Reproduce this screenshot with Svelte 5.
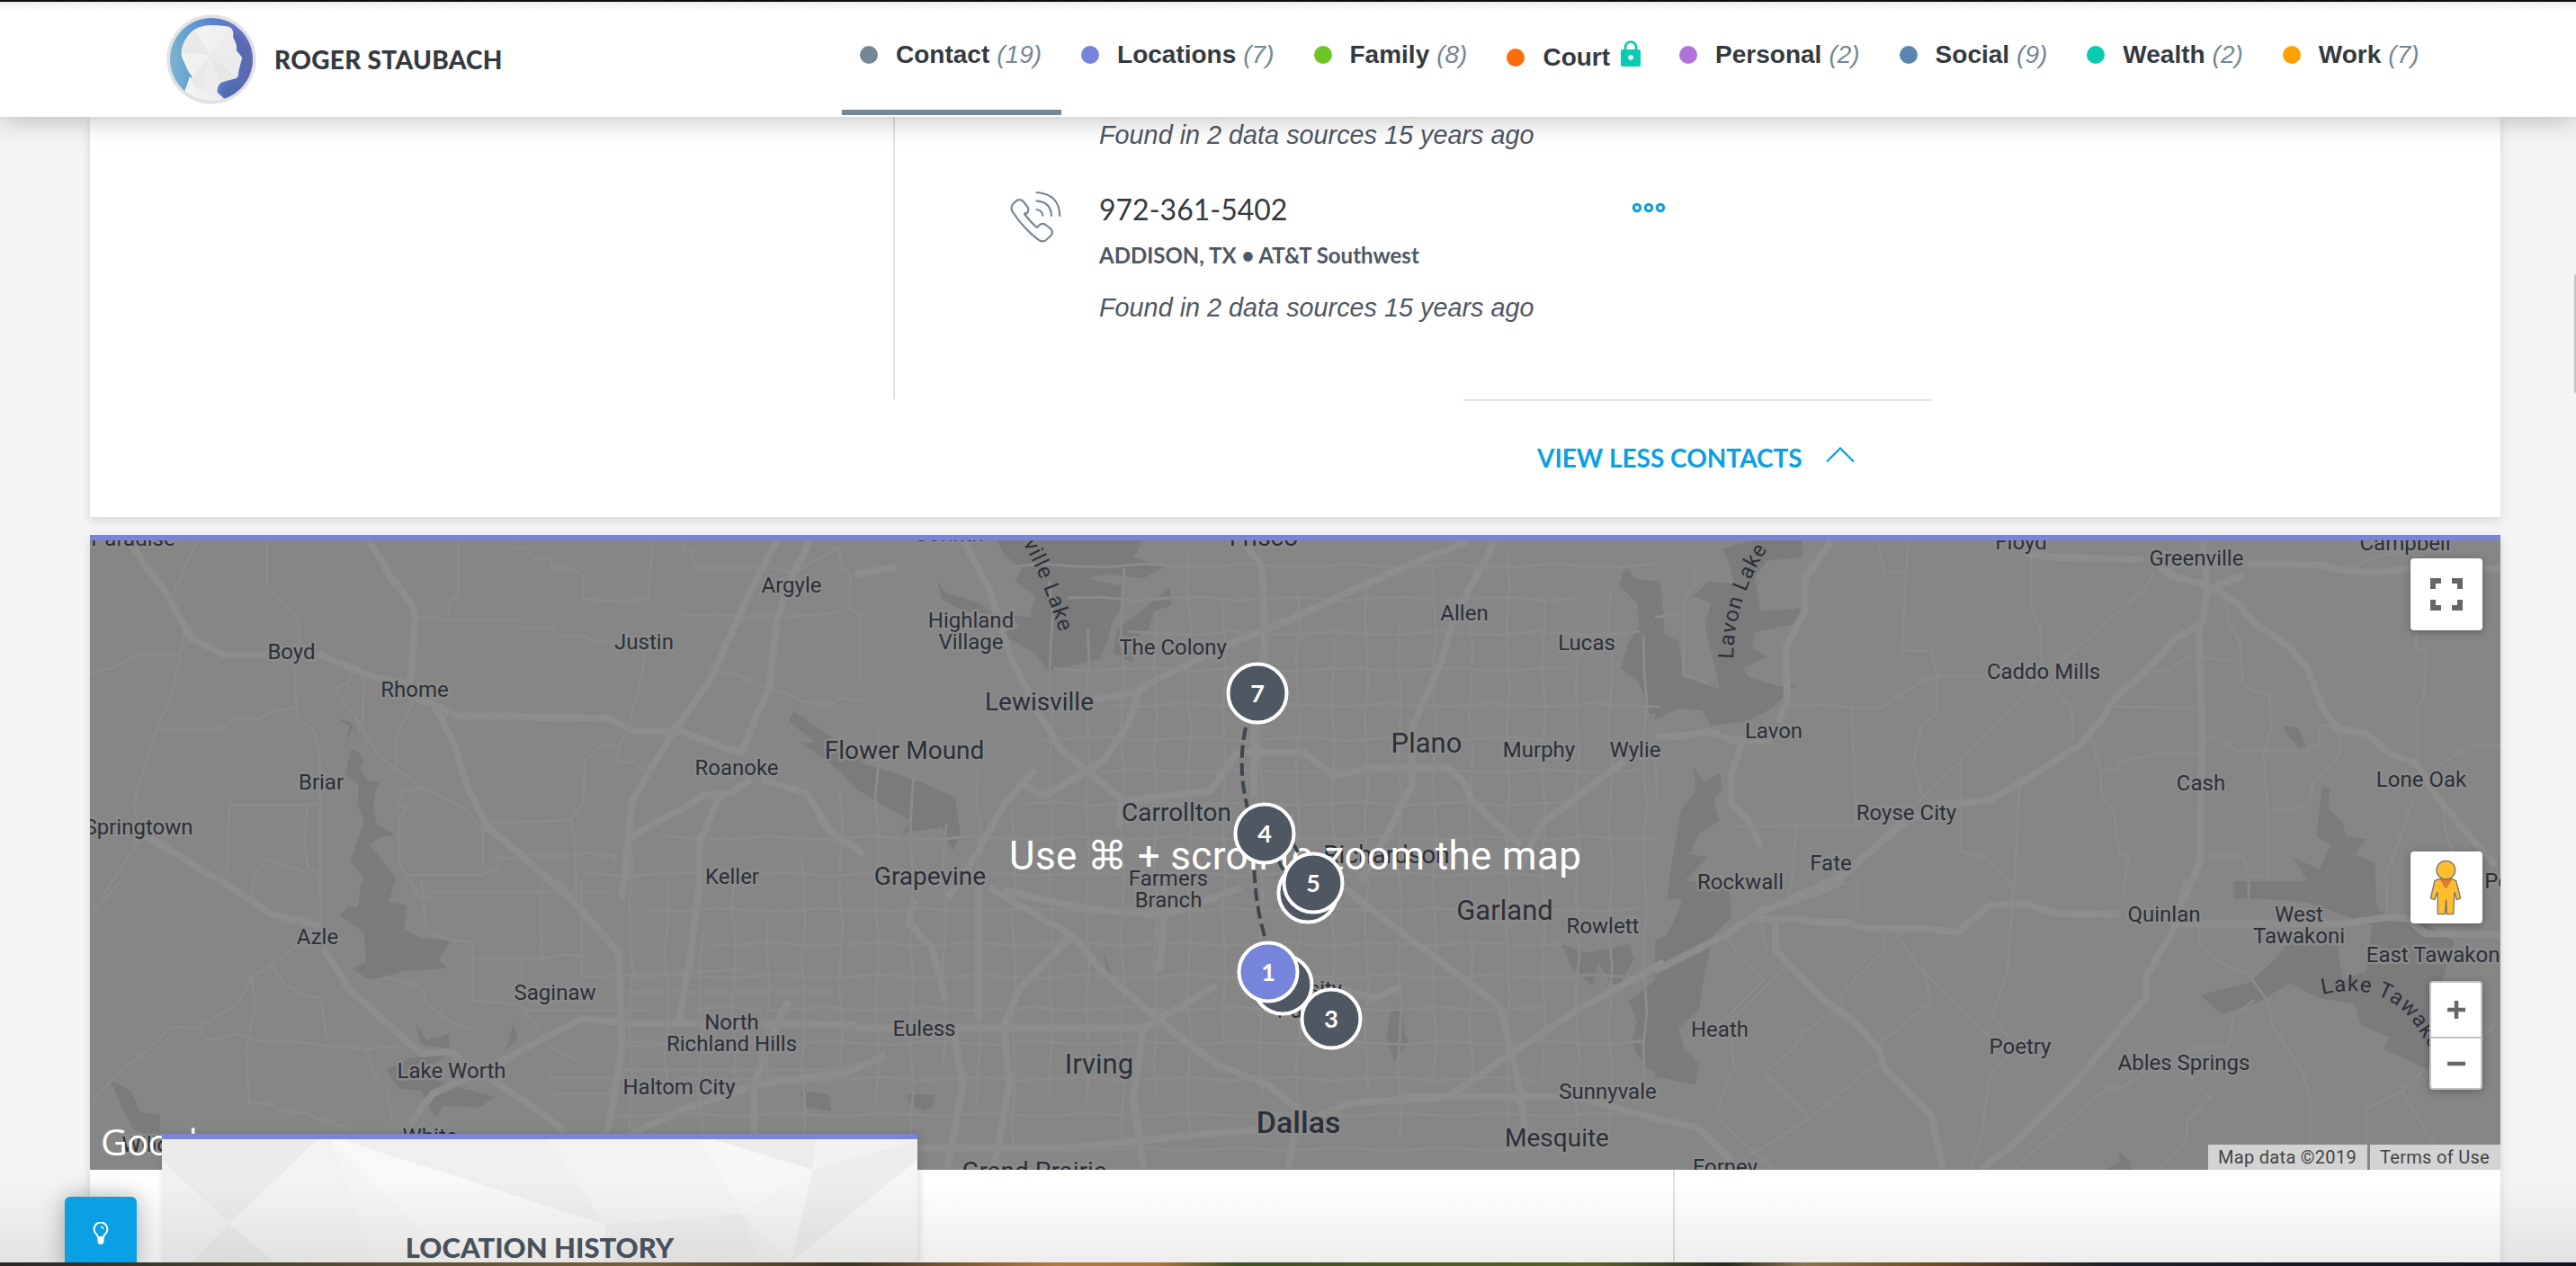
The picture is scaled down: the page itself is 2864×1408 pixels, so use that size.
<script>
  const tabs = [
    { name: 'Contact', count: '(19)', color: '#758793', active: true },
    { name: 'Locations', count: '(7)', color: '#7784db' },
    { name: 'Family', count: '(8)', color: '#6dc425' },
    { name: 'Court', locked: true, color: '#ff6d0a' },
    { name: 'Personal', count: '(2)', color: '#b072dd' },
    { name: 'Social', count: '(9)', color: '#5b87ae' },
    { name: 'Wealth', count: '(2)', color: '#07cbb3' },
    { name: 'Work', count: '(7)', color: '#ffa200' },
  ];

  // Town labels: text, centre x, baseline y, font size
  const towns = [
    ['Paradise', 148, 607, 24], ['Boyd', 324, 733, 24], ['Rhome', 461, 775, 24],
    ['Argyle', 880, 659, 24], ['Justin', 716, 722, 24], ['Roanoke', 819, 862, 24],
    ['Flower Mound', 1005.5, 844, 28], ['Briar', 357, 878, 24], ['Springtown', 154, 928, 24],
    ['Keller', 814, 983, 24], ['Azle', 353, 1050, 24], ['Saginaw', 617, 1112, 24],
    ['North', 813.5, 1145, 24], ['Richland Hills', 813.5, 1169, 24], ['Euless', 1027.5, 1152, 24],
    ['Lake Worth', 502, 1199, 24], ['Haltom City', 755, 1217, 24], ['White', 478, 1272, 24],
    ['Willow Park', 198, 1281, 24], ['Corinth', 1055, 602, 24], ['Frisco', 1405, 607, 28],
    ['Highland', 1079.5, 697.5, 24], ['Village', 1079.5, 721.5, 24], ['The Colony', 1304, 728, 24],
    ['Allen', 1628, 690, 24], ['Lucas', 1764, 723, 24], ['Lewisville', 1155.5, 790, 28],
    ['Plano', 1586, 837, 31], ['Murphy', 1711, 842, 24], ['Wylie', 1818, 842, 24],
    ['Carrollton', 1308, 913, 28], ['Richardson', 1541.5, 960, 28], ['Grapevine', 1034, 984, 28],
    ['Farmers', 1299, 985, 24], ['Branch', 1299, 1009, 24], ['Garland', 1673, 1023, 31],
    ['Rowlett', 1782, 1038, 24], ['University', 1440, 1108, 24], ['Park', 1444, 1132, 24],
    ['Irving', 1222, 1194, 31], ['Mesquite', 1731, 1275, 28], ['Sunnyvale', 1787.5, 1222, 24],
    ['Grand Prairie', 1150, 1312, 28], ['Floyd', 2247, 611, 24], ['Greenville', 2442, 629, 24],
    ['Campbell', 2674, 612, 24], ['Caddo Mills', 2272, 755, 24], ['Lavon', 1972, 821, 24],
    ['Cash', 2447, 879, 24], ['Lone Oak', 2692, 875, 24], ['Royse City', 2119.5, 912, 24],
    ['Fate', 2035.5, 968, 24], ['Rockwall', 1935, 989, 24], ['Point', 2790, 988, 24],
    ['Quinlan', 2406, 1025, 24], ['West', 2556, 1025, 24], ['Tawakoni', 2556, 1049, 24],
    ['East Tawakoni', 2708, 1070, 24], ['Heath', 1912, 1153, 24], ['Poetry', 2246, 1172, 24],
    ['Ables Springs', 2428, 1190, 24], ['Forney', 1918, 1306, 24],
  ];

  const pins = [
    { n: '7', x: 1398, y: 771 },
    { n: '4', x: 1406, y: 927 },
    { n: '6', x: 1454, y: 993 },
    { n: '5', x: 1460, y: 982 },
    { n: '2', x: 1426, y: 1095 },
    { n: '3', x: 1480, y: 1133 },
    { n: '1', x: 1410, y: 1081, current: true },
  ];

  // Local street grid of the metro area, wobbling slightly from block to block
  function street(fixed, from, to, vertical, seed) {
    let d = '';
    let off = 0;
    for (let t = from, i = 0; t <= to; t += 38, i++) {
      off += Math.sin(seed * 7.3 + i * 2.1) * 4;
      const a = (fixed + off).toFixed(1);
      d += (i ? 'L' : 'M') + (vertical ? `${a} ${t}` : `${t} ${a}`);
    }
    return d;
  }
  const streets = [];
  for (let i = 0; i < 30; i++) {
    const x = 700 + i * 39;
    const top = i < 6 ? 930 : i < 12 ? 800 : 610;
    streets.push(street(x, top + (i * 53) % 120, 1300 - ((i * 71) % 110), true, i));
  }
  for (let i = 0; i < 18; i++) {
    const y = 630 + i * 38;
    const left = i < 8 ? 1120 : 650;
    streets.push(street(y, left + (i * 67) % 150, 1860 - ((i * 97) % 190), false, i + 40));
  }
</script>

<div class="page">
  <div class="topline"></div>
  <header>
    <div class="person">
      <svg class="avatar" viewBox="0 0 300 300">
        <defs>
          <linearGradient id="av" x1="0" y1=".6" x2="1" y2=".5">
            <stop offset="0" stop-color="#84b6d0" /><stop offset=".3" stop-color="#5f9fd2" />
            <stop offset=".65" stop-color="#5a7bc8" /><stop offset="1" stop-color="#7d79cd" />
          </linearGradient>
          <clipPath id="avc"><circle cx="150" cy="150" r="138" /></clipPath>
          <filter id="avs"><feGaussianBlur stdDeviation="9" /></filter>
        </defs>
        <circle cx="150" cy="150" r="149" fill="#e2e2e3" />
        <g clip-path="url(#avc)">
          <rect width="300" height="300" fill="url(#av)" />
          <path d="M215 45L290 100L300 260L200 300L172 250L245 210Z" fill="#3f5690" opacity=".45" filter="url(#avs)" />
          <path d="M62 300V252L74 222L77 209L88 212Q72 178 60 160Q46 140 51 116Q56 88 79 62Q104 37 145 36Q205 35 218 48Q226 60 222 76Q232 94 235 108Q232 117 236 124Q250 138 252 146Q250 153 243 155Q245 162 242 165L243 172Q238 178 240 186Q243 206 232 213Q205 214 184 226Q168 240 170 260L198 286L190 310Z" fill="#ececec" />
          <g>
            <path d="M145 135L98 56L145 36Z" fill="#f3f3f3" />
            <path d="M145 135L51 128Q52 90 98 56Z" fill="#e9e9e8" />
            <path d="M145 135L145 36L212 42Z" fill="#f0f0f0" />
            <path d="M145 135L51 128Q60 175 88 212Z" fill="#f1f1f0" />
            <path d="M145 135L88 212L110 270Z" fill="#e9e9e8" />
            <path d="M145 135L180 228L235 212Z" fill="#e7e5e6" />
            <path d="M145 135L252 146L235 212Z" fill="#ebebea" />
            <path d="M77 209L62 260L100 285L90 240Z" fill="#f4f4f4" />
            <path d="M90 240L165 275L195 290L100 285Z" fill="#f1f1f0" />
          </g>
        </g>
      </svg>
      <span class="name">ROGER STAUBACH</span>
    </div>
    <nav>
      {#each tabs as tab}
        <div class="tab" class:active={tab.active} class:locked={tab.locked}>
          <svg class="dot" viewBox="0 0 20 20"><circle cx="10" cy="10" r="10" fill={tab.color} /></svg>
          <b>{tab.name}</b>
          {#if tab.locked}
            <svg class="lock" viewBox="0 0 22 30">
              <path d="M5 11V7.500a6 6 0 0 1 12 0V11" fill="none" stroke="#07cbb3" stroke-width="2.600" />
              <rect y="10" width="22" height="19" rx="2" fill="#07cbb3" />
              <circle cx="11" cy="19" r="2.800" fill="#fff" />
            </svg>
          {:else}
            <i>{tab.count}</i>
          {/if}
        </div>
      {/each}
    </nav>
  </header>

  <main>
    <section class="card contacts">
      <div class="body">
        <div class="side"></div>
        <div class="list">
          <p class="found">Found in 2 data sources 15 years ago</p>
          <div class="entry">
            <svg class="phone" viewBox="0 0 180 180" fill="none" stroke="#758793" stroke-width="6.500">
              <path d="M50 82Q62 74 58 60L42 39Q32 29 20 36L8 47Q-1 57 5 72Q38 124 92 167Q105 176 117 169L134 153Q144 142 134 131L117 117Q103 108 92 122L87 126Q66 108 46 81L50 75" transform="translate(2 3)" stroke-linejoin="round" />
              <path d="M86 69Q108 70 109 92M86 40Q137 42 138 92M86 12Q165 16 166 92" />
            </svg>
            <div class="details">
              <span class="number">972-361-5402</span>
              <span class="carrier">ADDISON, TX • AT&amp;T Southwest</span>
              <p class="found">Found in 2 data sources 15 years ago</p>
            </div>
            <svg class="more" viewBox="0 0 38 12" fill="none" stroke="#0aa0e2" stroke-width="3">
              <circle cx="6" cy="6" r="3.700" /><circle cx="19" cy="6" r="3.700" /><circle cx="32" cy="6" r="3.700" />
            </svg>
          </div>
        </div>
      </div>
      <div class="toggle">
        <span>VIEW LESS CONTACTS</span>
        <svg viewBox="0 0 32 18"><path d="M1 16.500L16 1.500L31 16.500" fill="none" stroke="#0aa0e2" stroke-width="2.200" /></svg>
      </div>
    </section>

    <section class="card locations">
      <div class="map">
        <svg class="canvas" viewBox="100 601 2680 700">
          <rect x="100" y="601" width="2680" height="700" fill="#868686" />
          <g class="water">
            <g transform="translate(60 580) scale(.5741 .3333)">
              <path d="M1432 632L1448 650L1470 680L1500 712L1530 760L1568 790V900L1545 880L1520 830L1490 790L1450 740L1475 735L1440 690L1424 665Z" />
              <path d="M575 760L590 770L600 800L592 830L610 865L630 870L622 910L618 960L625 1010L660 1045L628 1055L612 1080L635 1130L662 1190L650 1260H608L600 1190L574 1135L590 1050L600 1000L588 940L590 880L565 840Z" />
              <path d="M552 662Q578 660 584 700L590 730L578 690L568 730L572 680Z" />
            </g>
            <g transform="translate(60 980) scale(.6378 .3333)">
              <path d="M535 0H588L582 70L615 80L610 160L640 190L690 200L670 260L685 290L610 300L572 320L550 330L520 290L545 270L540 170L498 115L515 80L530 90Z" />
              <path d="M580 630L620 590L690 575L640 640L690 680L770 720L740 755L680 750L665 790L640 700L600 690Z" />
              <path d="M630 470L650 530L688 510L690 560L640 545ZM800 470L808 530L788 560L795 520Z" />
              <path d="M98 665L135 700L150 770L185 780V860L140 830L120 760Z" />
              <path d="M1300 700L1350 710L1355 770L1310 750ZM1488 710L1535 715L1520 770L1490 740Z" />
            </g>
            <g transform="translate(950 580) scale(.5741 .3333)">
              <path d="M275 64H560L540 120L600 150L560 190L490 175L450 190L520 215L518 290L500 330L490 400L475 460L375 500L350 440L282 375L320 350L300 310L340 320L350 250L310 200L325 160L290 110Z" />
              <path d="M610 220L615 280L580 300L570 360L530 400L540 470L500 440L510 360L560 290ZM160 200L180 240L240 270L270 310L210 300L170 260Z" />
              <path d="M0 800L60 830L130 870L195 920L205 1040L190 1100L170 1020L90 1040L110 1000L0 890Z" />
              <path d="M1495 150L1510 190L1560 200L1568 320V650L1540 640L1520 540L1485 490L1500 400L1520 350L1515 270L1480 210Z" />
            </g>
            <g transform="translate(950 980) scale(.5741 .3333)">
              <path d="M1500 210L1510 260L1480 350L1465 340L1440 270L1430 350L1390 290L1370 210L1420 240ZM1568 310V650L1530 620L1505 540L1515 470L1500 400Z" />
              <path d="M1040 420L1060 425L1065 500L1075 540L1045 600L1030 520ZM480 230L500 320L530 370L490 310ZM100 720L155 710L150 760L115 750Z" />
            </g>
            <g transform="translate(1840 580) scale(.6536 .3333)">
              <path d="M0 360L40 400L50 520L110 560L100 470L85 350L95 270L65 250L90 200L135 210L125 130L115 90L165 64H250V120L190 130L170 190L180 300L250 290L240 340L170 370L165 420L190 450L150 490L160 520L210 550L240 545L200 620L160 665L95 680L80 630L40 625L0 660Z" />
              <path d="M65 820L85 870L110 840L115 890L100 930L110 1000L75 1040L60 1110L90 1120L50 1200L60 1260H20L30 1120L45 960L70 900Z" />
              <path d="M1135 885L1148 890L1145 960L1170 1000L1175 1050L1210 1060L1190 1110L1225 1140L1226 1260H985V1225L1060 1215L1110 1200L1085 1120L1130 1160L1150 1080L1125 1050Z" />
              <path d="M1068 680L1095 690L1108 750L1095 755L1075 710Z" />
            </g>
            <g transform="translate(1840 980) scale(.6536 .3333)">
              <path d="M20 0L50 40L40 100L20 180L0 200V650L68 680L75 610L50 560L40 490L75 430L85 300L100 180L130 120L125 0Z" />
              <path d="M985 0H1226V60L1230 100L1300 130L1360 200L1340 330L1320 400L1318 630L1240 560L1250 520L1200 480L1190 410L1130 390L1080 340L1030 400L965 445L928 380L1010 340L1050 270L1080 200L1160 210L1170 330L1210 300L1220 150L1110 70L1040 60L985 60Z" />
              <path d="M790 900L810 940V963H765L790 940Z" />
            </g>
          </g>
          <g class="road minor">
            {#each streets as d}<path {d} />{/each}
            <g transform="translate(60 580) scale(.5741 .3333)">
              <path d="M278 64L225 260M412 64V210L475 330V430M465 470L470 650L505 700L515 800V1260M783 64V240L765 270V325M700 320H740L755 328H900L905 358H968L975 382H1030L1050 400L1100 398M890 64V90H918L922 122H962L965 155H1005L1025 185V258L1080 265L1150 260L1160 64M1218 64V100H1236L1240 155H1400L1430 175L1520 85L1525 150L1542 170V295L1560 310V520M1210 310L1420 318L1490 310L1530 296M70 508L120 485L155 447H245M252 370L245 450L225 590L200 680L155 940L165 1060L90 1260M200 690H325L345 660H395L420 635L465 620M575 505L570 540L542 555L580 640L605 720L635 790L715 890L790 950L840 1040M600 520L597 690M695 600L663 720V810M715 890L675 900L665 940L682 960L668 990V1140L685 1190L710 1260M340 945H515M340 945L335 1160L325 1190M490 950L485 1070L492 1160L515 1175M410 1125L470 1160L490 1170M410 1125L400 1160L385 1190V1260M840 1005L960 1000L1000 995L1025 940L1028 800L1060 745L1095 742L1090 800L1125 805L1145 835M1145 420L1140 500L1125 600L1110 700L1095 745M1000 995L1008 1060L1012 1260M830 1005V1150M685 1180H830L860 1155V1120L890 1125L910 1115H1010L1035 1105L1060 1115H1085V1140M720 1260L740 1235H1080M1285 500L1320 510L1380 555L1420 575L1450 600L1500 612L1525 590L1568 597" />
            </g>
            <g transform="translate(60 980) scale(.6378 .3333)">
              <path d="M118 0L63 110M465 0V150M450 180L370 290L345 320L320 410L250 490L205 485L160 570L105 650L63 750M250 490L270 530L320 510L360 535L400 530L460 545L545 560L605 550M380 280L400 340L435 380L465 390L475 520M345 320L350 420L335 560L340 740L380 745L400 770H430L520 830M545 560L560 650L580 690L590 810M575 320L640 350L650 410L700 480L730 490M640 0L650 170L690 195L730 205V400L810 410L870 560L910 600M730 260H850L880 245L920 248M815 260V400M820 432H1040M850 0V260M920 0V320L1160 300L1210 290M980 370H1380M990 550H1150M990 630H1360L1400 610M860 655H1010M870 708H1000" />
            </g>
            <g transform="translate(1840 580) scale(.6536 .3333)">
              <path d="M0 320L50 305V260L68 210V150M50 305L48 510L90 540M380 64L390 170H425M430 64L420 430L470 432L480 520V640L453 680L440 800L455 920M850 165L835 220L720 420L660 510L520 800L450 930L390 1040M640 110V290L655 350L658 470M670 540L710 625V730M225 615L290 612L335 620L385 622L460 525L500 515H560M335 620L342 1010M135 1018L350 1012M240 1015L235 1170L225 1260M520 800V1100L560 1120L610 1220M620 880L610 1260M740 715L758 830L760 910L780 960L790 1110L805 1120L795 1260M758 828H780L795 800L860 772H925M775 617L920 622M840 500H870L910 448L990 468M970 240L975 330L995 400L1000 540L1020 568L1045 575L1048 690L1035 770L1042 960V1185H1010L1000 1115H930M935 720L960 722L990 765H1060L1110 765L1130 740V682H1160M1165 700V780L1120 870L1110 940L1090 962H1042M1295 370V425L1313 430L1308 590L1297 620V800M1440 748L1385 750L1330 820M1290 920L1270 1040L1240 1200M1340 940L1345 1030L1360 1120M1190 155Q1230 90 1310 115M0 800L5 940" />
            </g>
            <g transform="translate(1840 980) scale(.6536 .3333)">
              <path d="M120 190L185 330L100 500M220 290L130 460V560L135 620L105 760M180 130L190 240M390 170V230L315 380L320 410L250 510L235 560L185 640L265 790L150 930M105 790L200 960M345 0V100M410 170L450 290L570 520M455 280L470 400L410 500L380 540M610 0L600 300L575 450L615 560L570 640L555 860L535 960M385 600L350 650L265 790M925 150V210L960 270L1010 310L1045 410L1050 480L1100 630L1115 720V960M1020 395L985 450L975 555H920L830 640L795 690H770L610 960M905 640L945 720L905 800V860L860 960M1305 635L1270 700L1210 760V960M1270 700L1310 830L1350 950M1010 0V60M1245 0V100M1350 150V170M1430 480L1380 560" />
            </g>
          </g>
          <g class="road major">
            <g transform="translate(60 580) scale(.5741 .3333)">
              <path d="M150 80L225 260L265 390L330 445H430M510 440L620 520L680 540M700 590L735 610L780 648L900 650L940 655L1070 656L1125 700L1215 700L1330 775M610 64L650 180L690 270L700 310L692 500L685 580M735 610L770 720L800 880L840 1020L910 1120L1000 1260M1400 64L1350 230L1270 530L1200 700L1120 930L1100 1260M1465 64L1430 180L1400 330L1385 560L1365 630L1330 780M1350 860L1310 905L1260 915L1110 1060M1370 860L1460 910L1500 1030L1568 1110M1290 915L1250 1070V1260M180 1050L380 1260" />
            </g>
            <g transform="translate(60 980) scale(.6378 .3333)">
              <path d="M290 0L380 110L465 150M470 220L510 350L560 440L640 575L690 570L720 610M875 0L985 240L990 560L970 790L960 870M1125 0L1110 250L1095 400L1090 480M760 620L920 460L1000 475H1150L1400 480M760 620L660 710L620 810M760 660L850 770L890 840M1280 400L1250 520L1220 680V850M1500 60L1490 140L1530 220L1555 400M1220 680L1100 760L1000 850M1450 580L1380 640L1220 680" />
            </g>
            <g transform="translate(950 580) scale(.5741 .3333)">
              <path d="M1190 64L1080 140L950 240L840 330L740 400L640 480L540 570L450 600M750 64L790 150L795 400L790 560L775 680V920M210 64L260 220L300 440L350 620L400 760L520 930L510 1020M550 570L530 680L480 800L370 915L330 880M520 930L690 900L740 770H870L930 850L1000 820H1150L1180 870L1200 940L1290 1080M1240 64L1160 330L1140 450L1080 690V880L1030 1050L980 1200M1490 800L1330 1010L1290 1150M350 830L290 940L240 1100L180 1260M0 180L80 150" />
            </g>
            <g transform="translate(950 980) scale(.5741 .3333)">
              <path d="M260 20L420 180L480 300L600 480L700 610L800 680L860 760M240 0V460M600 0V110L590 300M420 180L320 360L290 480L300 680L270 960M0 490H560L700 350M290 30L440 90L600 115L750 20M940 10L1080 200L1200 350L1250 420L1290 700L1300 860M1568 270L1400 430L1250 600L1150 720L960 740L850 820L640 850L420 890H120M1050 720L1300 720L1400 720L1568 800M860 760L840 960M560 480L540 720L560 960M190 480L210 680L180 960M870 340L960 370L1010 390L1060 350" />
            </g>
            <g transform="translate(1840 580) scale(.6536 .3333)">
              <path d="M300 64L255 190V300L222 420L225 600L210 670M0 720L50 715L90 700L130 728H200M150 730L130 840V940L160 1000L180 1090M630 105L680 120L830 127M860 150L880 180L940 215L990 270L1020 340L1080 420L1110 490L1135 620L1160 690L1210 710L1255 780L1295 805L1330 920L1430 1150M1010 140L1130 145L1180 165L1230 170L1300 150L1440 158M932 64L940 230L930 340L885 390L830 510L785 580L760 660L720 750L640 850L570 930L480 945L420 1010L320 1180L230 1260M925 350L930 640L928 1130L900 1260M1000 180L950 220" />
            </g>
            <g transform="translate(1840 980) scale(.6536 .3333)">
              <path d="M320 0L260 50L180 100L110 190L0 300M175 125H240L270 135L330 138L360 160H470L515 170L570 80L630 75L680 108L790 110M905 0L885 150L835 320V390L800 470L720 660L620 860L555 963M890 142L1170 143L1245 120L1280 125L1310 175L1440 178M205 130V230L290 400L340 470L380 560L390 620L470 780L490 960M0 790L75 825L130 930" />
            </g>
          </g>

          <g class="labels">
            {#each towns as [text, x, y, size]}
              <text {x} {y} font-size={size}>{text}</text>
            {/each}
            <text x="1443.700" y="1260" font-size="34" font-weight="500">Dallas</text>
          </g>
          <g class="labels lakes">
            <path id="lewisville" d="M1092 530Q1150 610 1178 704" fill="none" />
            <text font-size="24"><textPath href="#lewisville" startOffset="100%" text-anchor="end">Lewisville Lake</textPath></text>
            <path id="lavon" d="M1927 733Q1928 660 1975 596" fill="none" />
            <text font-size="24"><textPath href="#lavon" startOffset="0">Lavon Lake</textPath></text>
            <path id="tawakoni" d="M2582 1106Q2650 1090 2685 1140Q2705 1170 2722 1200" fill="none" />
            <text font-size="24"><textPath href="#tawakoni" startOffset="0">Lake Tawakoni</textPath></text>
          </g>

          <text class="hint" x="1122" y="966.500" textLength="636">Use ⌘ + scroll to zoom the map</text>
          <g class="trail">
            <path d="M1385 809Q1374 860 1391 912" />
            <path d="M1394.500 968Q1396 1010 1408 1048" />
            <path d="M1436 936L1446 952M1420 955L1440 990" />
          </g>
          {#each pins as pin}
            <g class="pin" class:current={pin.current}>
              <circle cx={pin.x} cy={pin.y} r="32.500" />
              <text x={pin.x} y={pin.y + 9.5}>{pin.n}</text>
            </g>
          {/each}
          <text class="google" x="112" y="1285">Google</text>
        </svg>

        <div class="control fullscreen">
          <svg viewBox="0 0 36 36"><path d="M3 12V3H12M24 3H33V12M33 24V33H24M12 33H3V24" fill="none" stroke="#666" stroke-width="6" /></svg>
        </div>
        <div class="control pegman">
          <svg viewBox="0 0 240 240" stroke="#757575" stroke-width="4">
            <path d="M94 92H140L152 98L167 156L155 161L147 136L143 209H121L119 162L115 209H91L90 136L80 161L67 156L81 98Z" fill="#fdbf2d" stroke-linejoin="round" />
            <path d="M97 92H140L118 125Z" fill="#e07b2d" stroke="none" />
            <circle cx="118" cy="62" r="31" fill="#fdbf2d" />
          </svg>
        </div>
        <div class="zoom">
          <div><svg viewBox="0 0 20 20"><path d="M0 10H20M10 0V20" stroke="#666" stroke-width="4.500" /></svg></div>
          <div><svg viewBox="0 0 20 20"><path d="M0 10H20" stroke="#666" stroke-width="4.500" /></svg></div>
        </div>
        <div class="legal"><span>Map data ©2019</span><span>Terms of Use</span></div>
      </div>
      <div class="lower">
        <div class="history">
          <svg class="facets" viewBox="188 861 1317 411" preserveAspectRatio="none">
            <rect x="188" y="861" width="1317" height="411" fill="#f2f2f2" />
            <path d="M188 861H460L305 1142L188 930Z" fill="#ebebea" />
            <path d="M188 930L305 1142L240 1272H188Z" fill="#f1f1f1" />
            <path d="M305 1142L385 1272H240Z" fill="#ebebea" />
            <path d="M460 861H475L560 1272H385L305 1142Z" fill="#f3f3f3" />
            <path d="M480 861H500L960 1145L740 1185L690 1272Z" fill="#f9f8f6" />
            <path d="M480 861L690 1272H560Z" fill="#f5f5f4" />
            <path d="M500 861H860L960 1145Z" fill="#efefed" />
            <path d="M860 861H1120L960 1145Z" fill="#f3f3f3" />
            <path d="M1120 861L1200 1110L960 1145Z" fill="#f4f4f3" />
            <path d="M1125 861H1150L1322 963L1200 1110Z" fill="#f8f7f5" />
            <path d="M1150 861H1328L1322 963Z" fill="#ececea" />
            <path d="M1328 861H1505L1322 963Z" fill="#f2f2f2" />
            <path d="M1505 865V930L1285 1272L1322 963Z" fill="#ededeb" />
            <path d="M1505 930V1272H1285Z" fill="#f6f6f5" />
            <path d="M1322 963L1285 1272L1200 1110Z" fill="#f5f5f4" />
            <path d="M960 1145L1200 1110L1230 1272H980Z" fill="#efeff0" />
            <path d="M740 1185L960 1145V1272H690Z" fill="#f8f8f8" />
          </svg>
          <h2>LOCATION HISTORY</h2>
        </div>
        <div class="column"></div>
        <div class="column last"></div>
      </div>
    </section>
  </main>

  <div class="shade"></div>
  <div class="tip">
    <svg viewBox="0 0 18 26" fill="none" stroke="#fff" stroke-width="2">
      <path d="M6 17Q5.500 14.500 3.200 12.500A7.400 7.400 0 1 1 14.800 12.500Q12.500 14.500 12 17Z" />
      <path d="M9 5.500Q11.500 5.500 12 8" stroke-width="1.300" />
      <path d="M5.500 17H12.500V22Q12 25 9 25T5.500 22Z" fill="#fff" stroke="none" />
    </svg>
  </div>
  <div class="scrollbar"></div>
  <footer></footer>
</div>

<style>
  :global(body) { overflow: hidden; }
  .page {
    position: relative;
    display: flex;
    flex-direction: column;
    width: 2864px;
    height: 1408px;
    overflow: hidden;
    background: #f4f4f4;
    font-family: 'Liberation Sans', Arial, sans-serif;
    color: #343a40;
  }
  .topline { height: 2px; background: #0d0b0c; flex: none; }
  header {
    position: relative;
    z-index: 2;
    display: flex;
    flex: none;
    height: 128px;
    box-sizing: border-box;
    padding-left: 185px;
    background: linear-gradient(#ebebeb, #fff 11px);
    box-shadow: 0 4px 26px rgba(0, 0, 0, 0.24);
  }
  .person { display: flex; align-items: center; width: 751px; padding-bottom: 0; gap: 20px; }
  .avatar { width: 100px; height: 100px; }
  .name { font: 900 28px/34px Lato, sans-serif; letter-spacing: 0.3px; color: #343a40; }
  nav { display: flex; gap: 2px; }
  .tab {
    display: flex;
    align-items: flex-start;
    box-sizing: border-box;
    height: 126px;
    padding: 43px 22px 0 20px;
    font-size: 28px;
    line-height: 32px;
    border-bottom: 6px solid transparent;
  }
  .tab.active { border-color: #758793; }
  .tab.locked { padding-top: 46px; padding-right: 21px; }
  .dot { width: 20px; height: 20px; margin: 6px 20px 0 0; }
  .tab i { margin-left: 8px; color: #758793; }
  .lock { width: 22px; height: 30px; margin: -3px 0 0 12px; }

  main { display: flex; flex-direction: column; gap: 20px; flex: 1; min-height: 0; padding: 0 84px 0 100px; }
  .card { background: #fff; box-shadow: 0 4px 10px rgba(0, 0, 0, 0.12); }
  .contacts { height: 445px; flex: none; }
  .body { display: flex; height: 314px; }
  .side { width: 893px; border-right: 2px solid #e2e2e2; }
  .list { padding: 3px 0 0 128px; }
  p { margin: 0; }
  .found { font-size: 28.800px; line-height: 34px; font-style: italic; color: #4f5763; }
  .list > .found { margin-left: 99px; }
  .entry { display: flex; margin-top: 43px; }
  .phone { width: 60px; height: 60px; margin-right: 39px; overflow: visible; }
  .details { display: flex; flex-direction: column; width: 592px; padding-top: 4px; }
  .number { font: 400 32px/38px Lato, sans-serif; color: #343a40; }
  .carrier { margin: 18px 0 27px; font: 700 24px/28px Lato, sans-serif; color: #4f5763; }
  .more { width: 38px; height: 12px; margin-top: 15px; }
  .toggle {
    display: flex;
    align-items: flex-start;
    gap: 26px;
    box-sizing: border-box;
    width: 520px;
    margin-left: 1527px;
    padding: 46px 0 0 82px;
    border-top: 2px solid #e2e2e2;
    font: 700 28px/34px Lato, sans-serif;
    color: #0aa0e2;
  }
  .toggle svg { width: 32px; height: 18px; margin-top: 5px; }

  .locations { display: flex; flex-direction: column; flex: none; border-top: 6px solid #7784db; }
  .map { position: relative; height: 700px; overflow: hidden; }
  .canvas { display: block; width: 2680px; height: 700px; font-family: Roboto, sans-serif; }
  .water { fill: #7b7b7b; }
  .road { fill: none; stroke: #8d8d8d; stroke-linejoin: round; }
  .road path { vector-effect: non-scaling-stroke; }
  .minor { stroke-width: 3; stroke: #8b8b8b; }
  .major { stroke-width: 8; }
  .labels text {
    fill: #2b3038;
    stroke: #8b8b8b;
    stroke-width: 5;
    stroke-linejoin: round;
    paint-order: stroke;
    text-anchor: middle;
  }
  .labels.lakes text { stroke: none; text-anchor: start; letter-spacing: 1px; }
  .hint { font-size: 44px; fill: #fff; font-family: Roboto, 'DejaVu Sans', sans-serif; }
  .trail { fill: none; stroke: #3c474e; stroke-width: 4; stroke-dasharray: 14 6; }
  .pin circle { fill: #4f5763; stroke: #fff; stroke-width: 4; }
  .pin.current circle { fill: #7784db; }
  .pin text { font: 700 27px Lato, sans-serif; fill: #fff; text-anchor: middle; }
  .google { font: 500 41px 'Open Sans', sans-serif; fill: #fff; letter-spacing: -1px; }

  .control {
    position: absolute;
    left: 2580px;
    display: flex;
    align-items: center;
    justify-content: center;
    width: 80px;
    height: 80px;
    border-radius: 4px;
    background: #fff;
    box-shadow: 0 2px 8px rgba(0, 0, 0, 0.3);
  }
  .fullscreen { top: 20px; }
  .fullscreen svg { width: 36px; height: 36px; }
  .pegman { top: 346px; }
  .pegman svg { width: 80px; height: 80px; }
  .zoom {
    position: absolute;
    left: 2601px;
    top: 490px;
    box-sizing: border-box;
    width: 59px;
    height: 121px;
    border: 2px solid #bdc3c7;
    border-radius: 4px;
    background: #fff;
    box-shadow: 0 2px 8px rgba(0, 0, 0, 0.3);
  }
  .zoom div { display: flex; align-items: center; justify-content: center; height: 60px; }
  .zoom div + div { height: 55px; border-top: 2px solid #bdc3c7; }
  .zoom svg { width: 20px; height: 20px; }
  .legal {
    position: absolute;
    right: 0;
    bottom: 0;
    display: flex;
    gap: 3px;
    font: 20px/28px Roboto, sans-serif;
    color: #444;
  }
  .legal span { padding: 0 12px 0 11px; background: #d3d3d3; letter-spacing: 0.3px; }

  .lower { display: flex; height: 103px; }
  .history {
    position: relative;
    display: flex;
    justify-content: center;
    box-sizing: border-box;
    width: 840px;
    height: 143px;
    margin: -40px 0 0 80px;
    border-top: 6px solid #7a84d8;
    box-shadow: 2px 0 8px rgba(0, 0, 0, 0.14);
  }
  .facets { position: absolute; inset: 0; width: 100%; height: 100%; }
  h2 { position: relative; margin: 101px 0 0; font: 900 31px/38px Lato, sans-serif; color: #4c5663; }
  .column { box-sizing: border-box; width: 842px; border-right: 2px solid #dfdfdf; }
  .column.last { flex: 1; border: 0; }

  .shade {
    position: absolute;
    left: 0;
    right: 0;
    bottom: 4px;
    height: 90px;
    background: linear-gradient(rgba(0, 0, 0, 0), rgba(0, 0, 0, 0.07));
  }
  .tip {
    position: absolute;
    left: 72px;
    top: 1331px;
    display: flex;
    justify-content: center;
    box-sizing: border-box;
    width: 80px;
    height: 80px;
    padding-top: 28px;
    border-radius: 6px;
    background: #09a0e4;
    box-shadow: 0 0 26px rgba(0, 0, 0, 0.3);
  }
  .tip svg { width: 18px; height: 26px; }
  .scrollbar {
    position: absolute;
    right: 0;
    top: 305px;
    width: 2px;
    height: 132px;
    border-radius: 2px 0 0 2px;
    background: #c4c4c4;
  }
  footer {
    position: relative;
    flex: none;
    height: 4px;
    background: linear-gradient(90deg, #2a2624, #4a4433 10%, #75603c 25%, #3c3424 33%, #b07a45 41%, #a8743f 45%, #3f4f24 48%, #5a5f2a 62%, #25291f 67%, #8a7350 70%, #6e4d25 75%, #1c1f27 82%, #10141e);
  }
</style>
